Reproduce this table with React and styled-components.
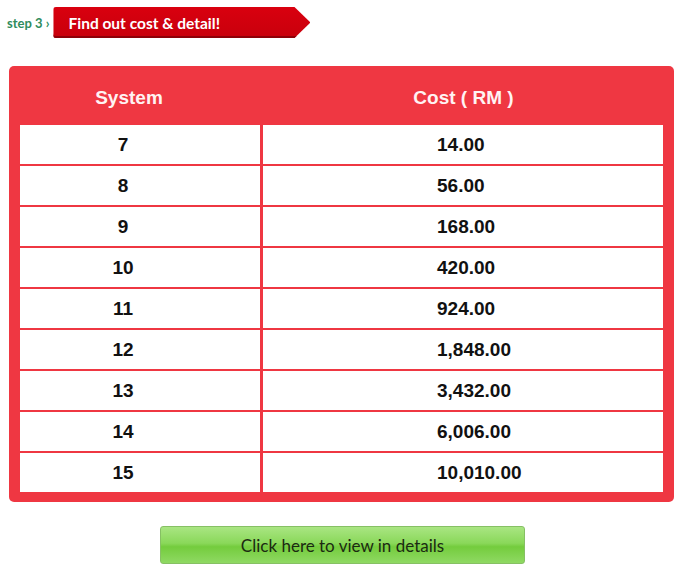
import React from "react";
import styled, { createGlobalStyle } from "styled-components";

const rows = [
  ["7", "14.00"],
  ["8", "56.00"],
  ["9", "168.00"],
  ["10", "420.00"],
  ["11", "924.00"],
  ["12", "1,848.00"],
  ["13", "3,432.00"],
  ["14", "6,006.00"],
  ["15", "10,010.00"],
];

const GlobalStyle = createGlobalStyle`
  body {
    margin: 0;
    background: #fff;
    font-family: "Liberation Sans", Arial, sans-serif;
  }
`;

const Page = styled.div`
  width: 685px;
  height: 570px;
  overflow: hidden;
`;

const StepBar = styled.div`
  display: flex;
  align-items: center;
  gap: 4px;
  padding: 7px 0 0 7px;
  height: 31px;
`;

const StepLabel = styled.span`
  font-family: Lato, "Open Sans", sans-serif;
  font-weight: 700;
  font-size: 13px;
  color: #2f8c5c;
`;

const Tag = styled.div`
  width: 257px;
  height: 31px;
  box-sizing: border-box;
  display: flex;
  align-items: center;
  padding-left: 15px;
  background: linear-gradient(#d9000f, #c8000c);
  border-radius: 3px;
  clip-path: polygon(0 0, calc(100% - 16px) 0, 100% 50%, calc(100% - 16px) 100%, 0 100%);
  box-shadow: inset 0 -2px 0 #8e0008;
  color: #fff;
  font-family: Lato, "Open Sans", sans-serif;
  font-weight: 700;
  font-size: 15.5px;
`;

const Card = styled.div`
  margin: 28px 0 0 9px;
  width: 665px;
  box-sizing: border-box;
  background: #ef3742;
  border-radius: 5px;
  padding: 0 11px 10px;
`;

const Head = styled.div`
  display: grid;
  grid-template-columns: 240px 403px;
  height: 59px;
  align-items: center;
  color: #fff3f3;
  font-weight: 700;
  font-size: 19px;
`;

const HeadCell = styled.div`
  text-align: center;
  padding: 4px ${(p) => p.$right || 0}px 0 ${(p) => p.$left || 0}px;
`;

const Grid = styled.div`
  display: grid;
  grid-template-columns: 240px 400px;
  grid-auto-rows: 39px;
  column-gap: 3px;
  row-gap: 2px;
`;

const Cell = styled.div`
  background: #fff;
  display: flex;
  align-items: center;
  justify-content: ${(p) => (p.$left ? "flex-start" : "center")};
  padding: ${(p) => (p.$left ? "0 0 0 174px" : "0 34px 0 0")};
  color: #111;
  font-weight: 700;
  font-size: 19px;
`;

const ButtonRow = styled.div`
  display: flex;
  justify-content: center;
  padding-top: 24px;
`;

const Button = styled.button`
  width: 365px;
  height: 38px;
  border: 1px solid #86c064;
  border-radius: 3px;
  background: linear-gradient(#a9e582 0%, #8ad85a 45%, #74cc3d 55%, #8fd963 100%);
  color: #1b2a12;
  font-family: Lato, "Open Sans", sans-serif;
  font-size: 17px;
  cursor: pointer;
`;

export default function App() {
  return (
    <Page>
      <GlobalStyle />
      <StepBar>
        <StepLabel>step 3 ›</StepLabel>
        <Tag>Find out cost &amp; detail!</Tag>
      </StepBar>
      <Card>
        <Head>
          <HeadCell $right={22}>System</HeadCell>
          <HeadCell $left={4}>Cost ( RM )</HeadCell>
        </Head>
        <Grid>
          {rows.map(([sys, cost]) => (
            <React.Fragment key={sys}>
              <Cell>{sys}</Cell>
              <Cell $left>{cost}</Cell>
            </React.Fragment>
          ))}
        </Grid>
      </Card>
      <ButtonRow>
        <Button>Click here to view in details</Button>
      </ButtonRow>
    </Page>
  );
}
